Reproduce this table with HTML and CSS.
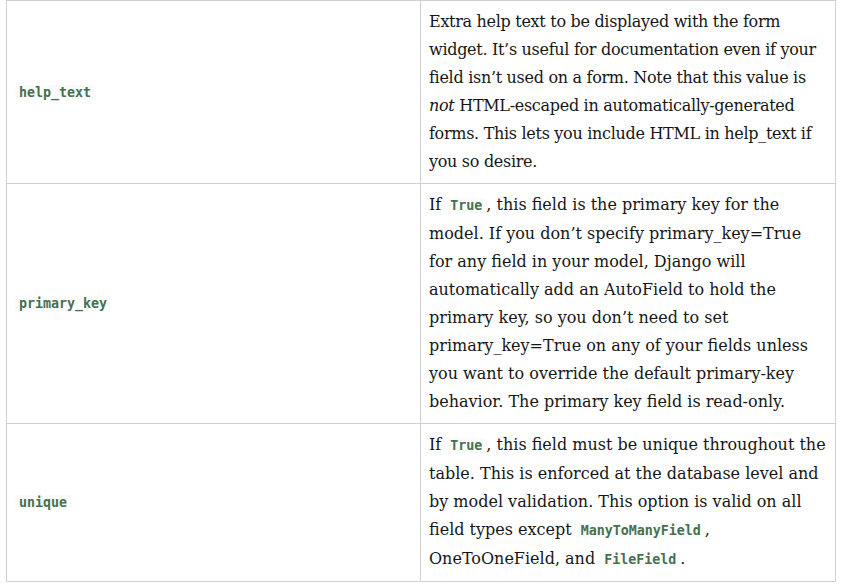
FILE: index.html
```html
<!DOCTYPE html>
<html>
<head>
<meta charset="utf-8">
<link rel="stylesheet" href="styles.css">
</head>
<body>
<table class="opts">
  <tbody>
    <tr>
      <td class="name"><code>help_text</code></td>
      <td class="desc tight">Extra help text to be displayed with the form<br>widget. It’s useful for documentation even if your<br>field isn’t used on a form. Note that this value is<br><em>not</em> HTML-escaped in automatically-generated<br>forms. This lets you include HTML in help_text if<br>you so desire.</td>
    </tr>
    <tr>
      <td class="name"><code>primary_key</code></td>
      <td class="desc">If <code>True</code>, this field is the primary key for the model. If you don’t specify primary_key=True for any field in your model, Django will automatically add an AutoField to hold the primary key, so you don’t need to set primary_key=True on any of your fields unless you want to override the default primary-key behavior. The primary key field is read-only.</td>
    </tr>
    <tr>
      <td class="name"><code>unique</code></td>
      <td class="desc">If <code>True</code>, this field must be unique throughout the table. This is enforced at the database level and by model validation. This option is valid on all field types except <code>ManyToManyField</code>, OneToOneField, and <code>FileField</code>.</td>
    </tr>
  </tbody>
</table>
</body>
</html>
```
FILE: styles.css
```css
html, body {
  margin: 0;
  padding: 0;
  background: #ffffff;
}
body {
  padding: 0 6px;
}
.opts {
  border-collapse: collapse;
  width: 830px;
  table-layout: fixed;
  font-family: "DejaVu Serif", "Liberation Serif", serif;
  font-size: 16px;
  line-height: 28px;
  color: #161616;
}
.opts td {
  border: 1px solid #d0d0d0;
  padding: 7px 8px;
  vertical-align: middle;
}
.opts td.name {
  width: 397px;
}
.opts td.tight {
  letter-spacing: -0.3px;
  white-space: nowrap;
}
.opts em {
  font-style: italic;
}
.opts code {
  font-family: "DejaVu Sans Mono", "Liberation Mono", monospace;
  font-weight: bold;
  font-size: 13.3px;
  letter-spacing: 0;
  line-height: 29px;
  vertical-align: top;
  color: #44704f;
  background: #fbfbfb;
  padding: 0 4px;
}
```
